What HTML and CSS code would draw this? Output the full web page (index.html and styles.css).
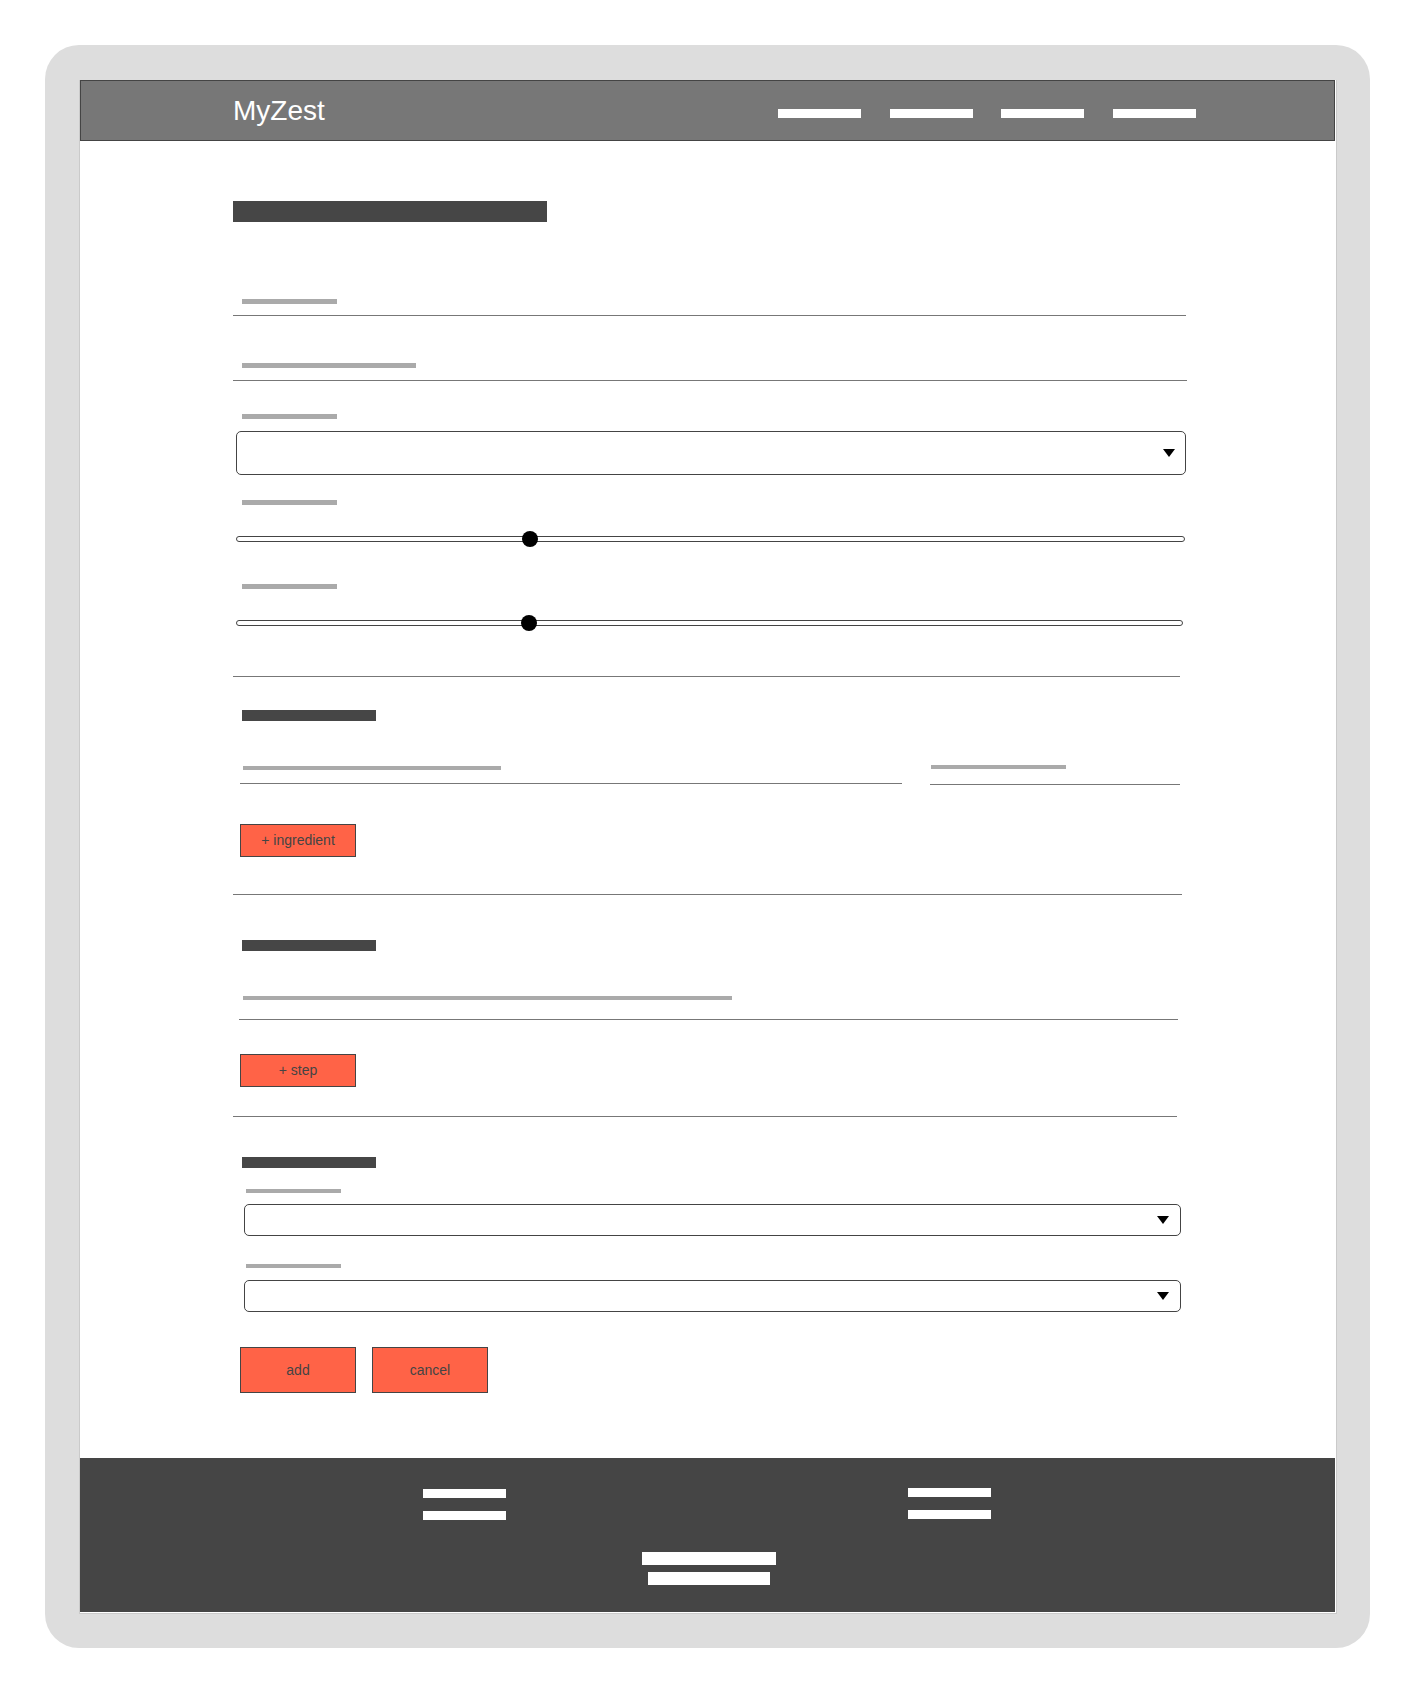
FILE: index.html
```html
<!DOCTYPE html>
<html lang="en">
<head>
<meta charset="utf-8">
<title>MyZest – add recipe</title>
<link rel="stylesheet" href="styles.css">
</head>
<body>
<div class="frame">
  <div class="screen">
    <header class="topbar">
      <div class="logo">MyZest</div>
      <nav class="nav">
        <span class="nav-item"></span>
        <span class="nav-item"></span>
        <span class="nav-item"></span>
        <span class="nav-item"></span>
      </nav>
    </header>

    <main class="content">
      <div class="page-title"></div>

      <div class="field field-name">
        <div class="ph ph-5 w-95"></div>
      </div>
      <div class="field field-desc">
        <div class="ph ph-5 w-174"></div>
      </div>

      <div class="ph ph-5 w-95 lbl-cat"></div>
      <div class="select select-lg">
        <svg class="caret" width="12" height="8" viewBox="0 0 12 8"><polygon points="0,0 12,0 6,8" fill="#000"/></svg>
      </div>

      <div class="ph ph-5 w-95 lbl-s1"></div>
      <div class="slider slider-1">
        <div class="track"></div>
        <span class="thumb" style="left:30.1%"></span>
      </div>

      <div class="ph ph-5 w-95 lbl-s2"></div>
      <div class="slider slider-2">
        <div class="track"></div>
        <span class="thumb" style="left:30.1%"></span>
      </div>

      <div class="divider div-1"></div>

      <div class="heading head-1"></div>
      <div class="ing-row">
        <div class="field ing-name">
          <div class="ph ph-4 w-258"></div>
        </div>
        <div class="field ing-qty">
          <div class="ph ph-4 w-135"></div>
        </div>
      </div>
      <button class="btn btn-sm btn-ing">+ ingredient</button>

      <div class="divider div-2"></div>

      <div class="heading head-2"></div>
      <div class="field step-field">
        <div class="ph ph-4 w-489"></div>
      </div>
      <button class="btn btn-sm btn-step">+ step</button>

      <div class="divider div-3"></div>

      <div class="heading head-3"></div>
      <div class="ph ph-4 w-95 lbl-b1"></div>
      <div class="select select-sm sel-b1">
        <svg class="caret" width="12" height="8" viewBox="0 0 12 8"><polygon points="0,0 12,0 6,8" fill="#000"/></svg>
      </div>
      <div class="ph ph-4 w-95 lbl-b2"></div>
      <div class="select select-sm sel-b2">
        <svg class="caret" width="12" height="8" viewBox="0 0 12 8"><polygon points="0,0 12,0 6,8" fill="#000"/></svg>
      </div>

      <div class="actions">
        <button class="btn btn-lg">add</button>
        <button class="btn btn-lg">cancel</button>
      </div>
    </main>

    <footer class="footer">
      <div class="footer-cols">
        <div class="fcol">
          <span class="fbar"></span>
          <span class="fbar"></span>
        </div>
        <div class="fcol fcol-right">
          <span class="fbar"></span>
          <span class="fbar"></span>
        </div>
      </div>
      <div class="fcenter">
        <span class="cbar cbar-1"></span>
        <span class="cbar cbar-2"></span>
      </div>
    </footer>
  </div>
</div>
</body>
</html>
```

FILE: styles.css
```css
* { box-sizing: border-box; }

html, body {
  margin: 0;
  padding: 0;
  background: #fff;
  font-family: "Liberation Sans", Arial, sans-serif;
}

.frame {
  margin: 45px 0 0 45px;
  width: 1325px;
  height: 1603px;
  padding: 35px 0 0 34px;
  background: #dddddd;
  border-radius: 34px;
}

.screen {
  width: 1258px;
  background: #fff;
  border-left: 1px solid #cacaca;
  border-right: 1px solid #cacaca;
  border-bottom: 1px solid #cacaca;
  padding-bottom: 1px;
}

/* header */
.topbar {
  width: 1255px;
  height: 61px;
  background: #777777;
  border: 1px solid #444;
  display: flex;
  align-items: center;
  padding-left: 152px;
}
.logo {
  color: #fff;
  font-size: 28px;
  line-height: 32px;
}
.nav {
  margin-left: auto;
  margin-right: 138px;
  margin-top: 5px;
  display: flex;
  gap: 28.67px;
}
.nav-item {
  display: block;
  width: 83px;
  height: 9px;
  background: #fff;
}

/* content */
.content {
  display: flex;
  flex-direction: column;
  align-items: flex-start;
  padding: 60px 0 65px 153px;
}

.page-title {
  width: 314px;
  height: 21px;
  background: #464646;
}

.ph { background: #aaaaaa; }
.ph-5 { height: 5px; }
.ph-4 { height: 4px; }
.w-95 { width: 95px; }
.w-174 { width: 174px; }
.w-258 { width: 258px; }
.w-135 { width: 135px; }
.w-489 { width: 489px; }

.field {
  border-bottom: 1px solid #777;
}
.field-name {
  margin-top: 77px;
  width: 953px;
  padding-left: 9px;
}
.field-name .ph { margin-bottom: 11px; }
.field-desc {
  margin-top: 47px;
  width: 954px;
  padding-left: 9px;
}
.field-desc .ph { margin-bottom: 12px; }

.lbl-cat { margin: 33px 0 0 9px; }

.select {
  border: 1px solid #444;
  border-radius: 5px;
  background: #fff;
  display: flex;
  align-items: center;
  justify-content: flex-end;
}
.caret { display: block; }
.select-lg {
  margin: 12px 0 0 3px;
  width: 950px;
  height: 44px;
  padding-right: 10px;
}

.lbl-s1 { margin: 25px 0 0 9px; }
.lbl-s2 { margin: 37px 0 0 9px; }

.slider {
  position: relative;
  height: 16px;
  margin: 26px 0 0 3px;
}
.slider-1 { width: 949px; }
.slider-2 { width: 947px; }
.track {
  margin-top: 5px;
  height: 6px;
  border: 1px solid #444;
  border-radius: 3px;
  background: #fff;
}
.thumb {
  position: absolute;
  top: 0;
  width: 16px;
  height: 16px;
  border-radius: 50%;
  background: #000;
}

.divider {
  height: 1px;
  background: #777;
}
.div-1 { margin-top: 45px; width: 947px; }
.div-2 { margin-top: 37px; width: 949px; }
.div-3 { margin-top: 29px; width: 944px; }

.heading {
  margin-left: 9px;
  width: 134px;
  height: 11px;
  background: #464646;
}
.head-1 { margin-top: 33px; }
.head-2 { margin-top: 45px; }
.head-3 { margin-top: 40px; }

.ing-row {
  margin-top: 45px;
  display: flex;
  align-items: flex-start;
}
.ing-name {
  margin-left: 7px;
  width: 662px;
  padding-left: 3px;
}
.ing-name .ph { margin-bottom: 13px; }
.ing-qty {
  margin-left: 28px;
  margin-top: -1px;
  width: 250px;
  padding-left: 1px;
}
.ing-qty .ph { margin-bottom: 15px; }

.btn {
  font-family: "Liberation Sans", Arial, sans-serif;
  font-size: 14px;
  color: #444;
  background: #ff6347;
  border: 1px solid #444;
  border-radius: 0;
  padding: 0 0 1px;
  margin: 0;
  width: 116px;
  display: flex;
  align-items: center;
  justify-content: center;
}
.btn-sm { height: 33px; margin-left: 7px; }
.btn-ing { margin-top: 39px; }
.btn-step { margin-top: 34px; }
.btn-lg { height: 46px; }

.step-field {
  margin: 45px 0 0 6px;
  width: 939px;
  padding-left: 4px;
}
.step-field .ph { margin-bottom: 19px; }

.lbl-b1 { margin: 21px 0 0 13px; }
.lbl-b2 { margin: 28px 0 0 13px; }
.select-sm {
  margin-left: 11px;
  width: 937px;
  height: 32px;
  padding-right: 11px;
}
.sel-b1 { margin-top: 11px; }
.sel-b2 { margin-top: 12px; }

.actions {
  margin: 35px 0 0 7px;
  display: flex;
  gap: 16px;
}

/* footer */
.footer {
  width: 1255px;
  height: 154px;
  background: #454545;
  padding-top: 31px;
}
.footer-cols {
  display: flex;
  padding-left: 343px;
  gap: 402px;
}
.fcol {
  display: flex;
  flex-direction: column;
  gap: 13px;
}
.fcol-right { margin-top: -1px; }
.fbar {
  display: block;
  width: 83px;
  height: 9px;
  background: #fff;
}
.fcenter {
  margin-top: 32px;
  padding-left: 3px;
  display: flex;
  flex-direction: column;
  align-items: center;
  gap: 7px;
}
.cbar {
  display: block;
  height: 13px;
  background: #fff;
}
.cbar-1 { width: 134px; }
.cbar-2 { width: 122px; }
```
